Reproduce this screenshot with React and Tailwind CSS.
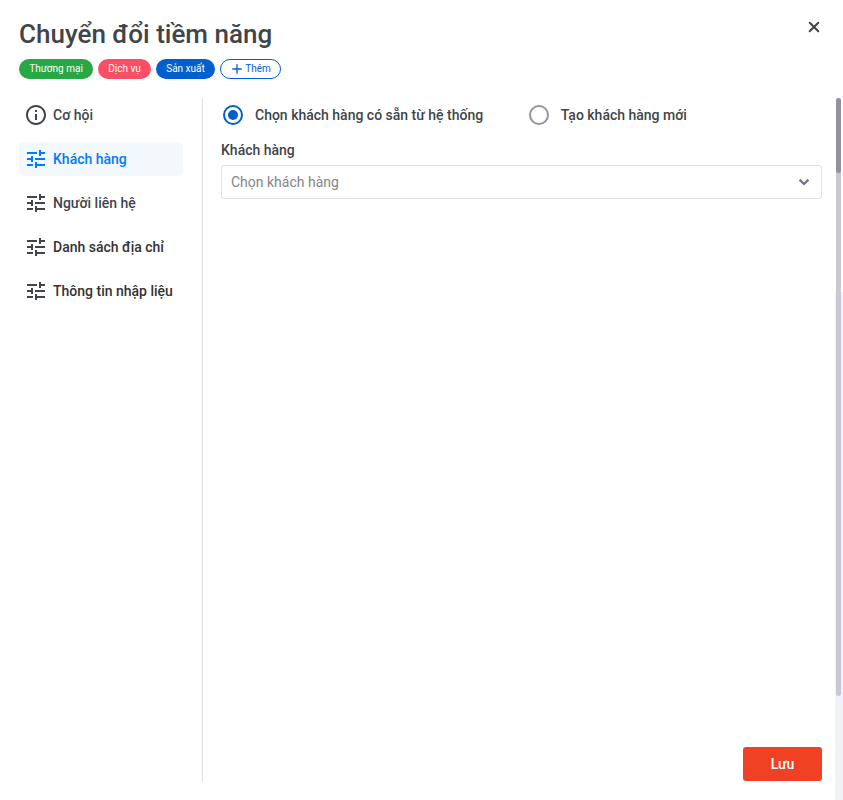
const TUNE = 'M3 17v2h6v-2H3zM3 5v2h10V5H3zm10 16v-2h8v-2h-8v-2h-2v6h2zM7 9v2H3v2h4v2h2V9H7zm14 4v-2H11v2h10zm-6-4h2V7h4V5h-4V3h-2v6z'
const INFO = 'M11 7h2v2h-2zm0 4h2v6h-2zm1-9C6.48 2 2 6.48 2 12s4.48 10 10 10 10-4.48 10-10S17.52 2 12 2zm0 18c-4.41 0-8-3.59-8-8s3.59-8 8-8 8 3.59 8 8-3.59 8-8 8z'

const tags = [
  { label: 'Thương mại', style: 'w-[74px] bg-[#28a745]' },
  { label: 'Dịch vụ', style: 'w-[53px] bg-[#f94e63]' },
  { label: 'Sản xuất', style: 'w-[59px] bg-[#005fcf]' },
]

const menu = [
  { label: 'Cơ hội', icon: INFO, style: 'text-[#3f4549]' },
  { label: 'Khách hàng', icon: TUNE, style: 'bg-[#f3f8fc] text-[#007bff]', active: true },
  { label: 'Người liên hệ', icon: TUNE, style: 'text-[#3f4549]' },
  { label: 'Danh sách địa chỉ', icon: TUNE, style: 'text-[#333333]' },
  { label: 'Thông tin nhập liệu', icon: TUNE, style: 'text-[#333333]' },
]

function Header() {
  return (
    <header className="flex h-[79px] items-start justify-between pt-4">
      <div>
        <h1 className="h-9 text-[26px] leading-9 font-medium whitespace-nowrap text-[#3f4549]">Chuyển đổi tiềm năng</h1>
        <div className="mt-[7px] flex gap-[5px] text-[10px] leading-5">
          {tags.map((tag) => (
            <span key={tag.label} className={`h-5 rounded-full text-center whitespace-nowrap text-white ${tag.style}`}>
              {tag.label}
            </span>
          ))}
          <button className="flex h-5 w-[61px] items-center justify-center gap-[3px] rounded-full border border-[#005fcf] pl-0.5 text-[#005fcf]">
            <svg className="size-[10px]" viewBox="0 0 10 10" stroke="currentColor" strokeWidth="1.3" fill="none">
              <path d="M5 0.3v9.4M0.3 5h9.4" />
            </svg>
            Thêm
          </button>
        </div>
      </div>
      <button aria-label="Đóng" className="mt-[5px] mr-[2px] text-[#3f4549]">
        <svg className="size-3" viewBox="0 0 12 12" stroke="currentColor" strokeWidth="2" strokeLinecap="round">
          <path d="M1.7 1.7l8.6 8.6M10.3 1.7l-8.6 8.6" />
        </svg>
      </button>
    </header>
  )
}

function Sidebar() {
  return (
    <nav className="flex w-[184px] shrink-0 flex-col gap-2.5 border-r border-[#e0e0e6] pr-[19px]">
      {menu.map((item) => (
        <a key={item.label} className={`flex h-[34px] items-center gap-[5px] rounded-[5px] pl-[5px] text-sm font-medium whitespace-nowrap ${item.style}`}>
          <svg className={`size-6 shrink-0 ${item.active ? 'text-[#007bff]' : 'text-[#3f4549]'}`} viewBox="0 0 24 24" fill="currentColor">
            <path d={item.icon} />
          </svg>
          {item.label}
        </a>
      ))}
    </nav>
  )
}

function Radio({ label, checked }) {
  return (
    <label className="flex h-5 items-center gap-3">
      <span className={`flex size-5 items-center justify-center rounded-full border-2 ${checked ? 'border-[#005fcf]' : 'border-[#9593a5]'}`}>
        {checked && <span className="size-2.5 rounded-full bg-[#005fcf]" />}
      </span>
      {label}
    </label>
  )
}

function CustomerForm() {
  return (
    <main className="flex flex-1 flex-col pt-[7px] pl-[18px] text-sm">
      <div className="flex gap-[45.5px] pl-0.5 font-medium whitespace-nowrap text-[#3f4549]">
        <Radio label="Chọn khách hàng có sẵn từ hệ thống" checked />
        <Radio label="Tạo khách hàng mới" />
      </div>
      <div className="mt-[15px] leading-5 font-medium text-[#3f4549]">Khách hàng</div>
      <div className="mt-[5px] flex h-[34px] items-center justify-between rounded-[3px] border border-[#e1e1ea] pr-[11px] pl-[9px] text-[#858585]">
        Chọn khách hàng
        <svg className="size-3 text-[#74738a]" viewBox="0 0 12 12" fill="none" stroke="currentColor" strokeWidth="2.2">
          <path d="M1.6 3.6L6 8l4.4-4.4" />
        </svg>
      </div>
      <button className="mt-auto mb-px h-[34px] w-[79px] self-end rounded-[3px] bg-[#f14124] text-center font-medium text-white">Lưu</button>
    </main>
  )
}

export default function App() {
  return (
    <div className="relative h-[800px] w-[843px] overflow-hidden bg-white pr-[21px] pl-[19px] font-[Roboto,'Liberation_Sans',sans-serif]">
      <Header />
      <div className="mt-[19px] flex h-[684px]">
        <Sidebar />
        <CustomerForm />
      </div>
      <div className="absolute top-[292px] right-0 h-[508px] w-2 bg-[#f1f1f8]" />
      <div className="absolute top-[98px] right-[2px] h-[598px] w-[5px] rounded-full bg-[#c8c7d2]">
        <div className="h-[75px] rounded-full bg-[#9391a0]" />
      </div>
    </div>
  )
}
